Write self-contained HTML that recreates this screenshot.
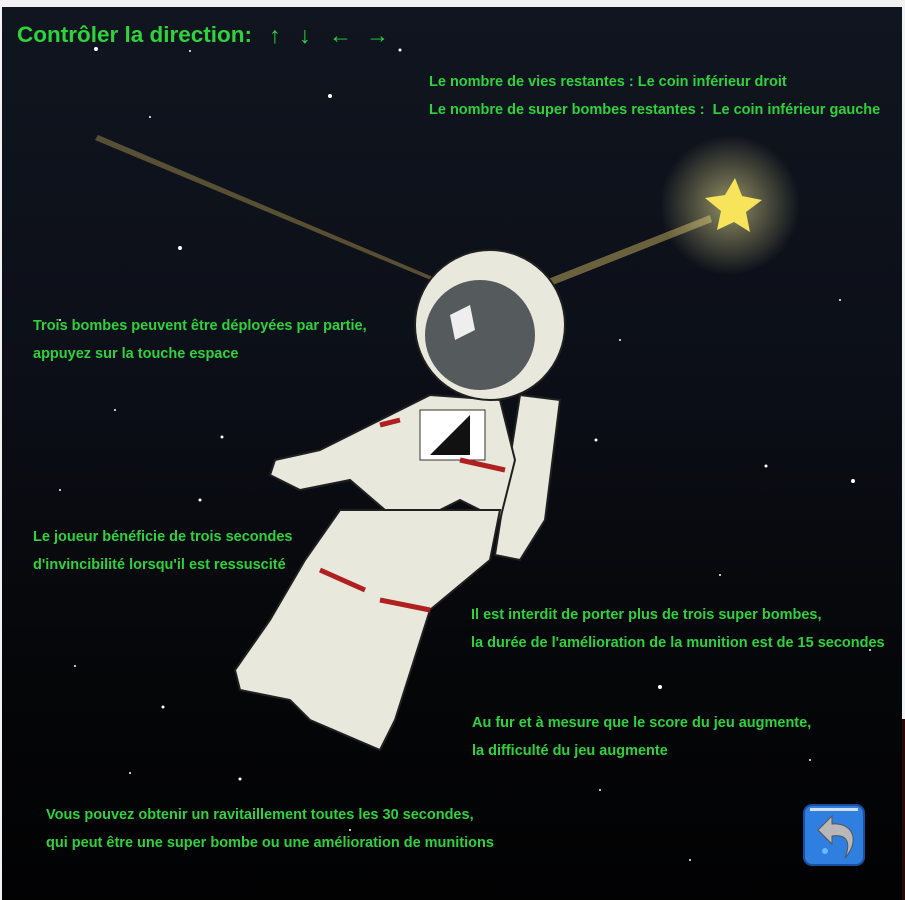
<!DOCTYPE html>
<html><head><meta charset="utf-8"><style>
body{margin:0;width:905px;height:900px;overflow:hidden;background:#f2f2f2;font-family:"Liberation Sans",sans-serif}
#bg{position:absolute;left:2px;top:7px;width:900px;height:893px;background:linear-gradient(#10151f 0%,#0c0f18 40%,#050608 75%,#020203 100%)}
#edge{position:absolute;left:902px;top:7px;width:3px;height:712px;background:#f2f2f2}
#edge2{position:absolute;left:902px;top:719px;width:3px;height:181px;background:#2a0808}
.t{position:absolute;color:#2fd23c;font-weight:bold;font-size:14.5px;line-height:28px;white-space:nowrap}
.a{position:absolute;top:20px;color:#2fd23c;font-size:23px;line-height:30px}
svg{position:absolute;left:0;top:0}
</style></head><body>
<div id="bg"></div><div id="edge"></div><div id="edge2"></div>
<svg width="905" height="900">
<defs><radialGradient id="g"><stop offset="0" stop-color="#fff7a0" stop-opacity=".55"/><stop offset="1" stop-color="#fff7a0" stop-opacity="0"/></radialGradient></defs>
<g fill="#fff">
<circle cx="96" cy="49" r="2"/><circle cx="330" cy="96" r="2"/><circle cx="190" cy="51" r="1"/><circle cx="150" cy="117" r="1"/><circle cx="200" cy="500" r="1.5"/><circle cx="222" cy="437" r="1.5"/><circle cx="115" cy="410" r="1"/><circle cx="440" cy="530" r="1.5"/><circle cx="660" cy="687" r="2"/><circle cx="853" cy="481" r="2"/><circle cx="766" cy="466" r="1.5"/><circle cx="596" cy="440" r="1.5"/><circle cx="840" cy="300" r="1"/><circle cx="400" cy="50" r="1.5"/><circle cx="180" cy="248" r="2"/><circle cx="60" cy="320" r="1"/><circle cx="60" cy="490" r="1"/><circle cx="163" cy="707" r="1.5"/><circle cx="75" cy="666" r="1"/><circle cx="810" cy="760" r="1"/><circle cx="240" cy="779" r="1.5"/><circle cx="600" cy="790" r="1"/><circle cx="130" cy="773" r="1"/><circle cx="720" cy="575" r="1"/><circle cx="620" cy="340" r="1"/><circle cx="870" cy="650" r="1"/><circle cx="350" cy="830" r="1"/><circle cx="690" cy="860" r="1"/>
</g>
<path d="M98 135 L440 280 L445 286 L95 140Z" fill="#8a7a45" opacity=".6"/>
<path d="M520 290 L710 215 L712 222 L525 296Z" fill="#a89a55" opacity=".6"/>
<circle cx="730" cy="205" r="70" fill="url(#g)"/>
<path d="M735 178 L742 196 L762 200 L746 212 L750 232 L734 222 L717 230 L721 211 L705 198 L725 195Z" fill="#f8e45a"/>
<g fill="#e8e9dc" stroke="#202020" stroke-width="2">
<path d="M520 395 L560 400 L545 520 L520 560 L495 555Z"/>
<path d="M320 450 L380 420 L430 395 L500 400 L515 460 L500 520 L460 500 L420 520 L385 510 L350 480 L300 490 L270 475 L275 460Z"/>
<path d="M340 510 L500 510 L490 560 L430 610 L395 720 L380 750 L310 720 L290 700 L240 690 L235 670 L270 620 L305 560Z"/>
<circle cx="490" cy="325" r="75"/>
</g>
<circle cx="480" cy="335" r="55" fill="#555a5c"/>
<path d="M450 315 L470 305 L475 330 L455 340Z" fill="#eee"/>
<rect x="420" y="410" width="65" height="50" fill="#fff" stroke="#333"/>
<path d="M430 455 L470 415 L470 455Z" fill="#111"/>
<path d="M380 425 L400 420 M460 460 L505 470 M320 570 L365 590 M380 600 L430 610" stroke="#b02020" stroke-width="5"/>
<rect x="804" y="805" width="60" height="60" rx="8" fill="#2f7fe0" stroke="#1a4fa0" stroke-width="2"/>
<rect x="810" y="808" width="48" height="3" fill="#cfe0f0"/>
<path d="M818 830 L832 816 L832 824 C850 822 862 838 845 858 C852 840 845 834 832 836 L832 844Z" fill="#b8b8b8" stroke="#555"/>
<circle cx="825" cy="851" r="3" fill="#6ab8ff"/>
</svg>
<div class="t" style="left:17px;top:20px;font-size:22.5px;line-height:30px">Contrôler la direction:</div>
<div class="a" style="left:269px">↑</div><div class="a" style="left:299px">↓</div><div class="a" style="left:329px">←</div><div class="a" style="left:366px">→</div>
<div class="t" style="left:429px;top:68px">Le nombre de vies restantes : Le coin inférieur droit<br>Le nombre de super bombes restantes : &nbsp;Le coin inférieur gauche</div>
<div class="t" style="left:33px;top:312px">Trois bombes peuvent être déployées par partie,<br>appuyez sur la touche espace</div>
<div class="t" style="left:33px;top:523px">Le joueur bénéficie de trois secondes<br>d'invincibilité lorsqu'il est ressuscité</div>
<div class="t" style="left:471px;top:601px">Il est interdit de porter plus de trois super bombes,<br>la durée de l'amélioration de la munition est de 15 secondes</div>
<div class="t" style="left:472px;top:709px">Au fur et à mesure que le score du jeu augmente,<br>la difficulté du jeu augmente</div>
<div class="t" style="left:46px;top:801px">Vous pouvez obtenir un ravitaillement toutes les 30 secondes,<br>qui peut être une super bombe ou une amélioration de munitions</div>
</body></html>
